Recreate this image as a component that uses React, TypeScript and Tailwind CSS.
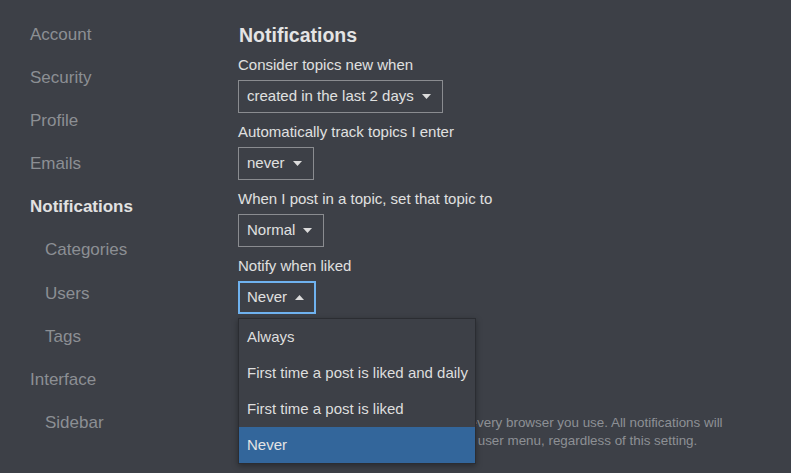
const nav = [
  { label: "Account" },
  { label: "Security" },
  { label: "Profile" },
  { label: "Emails" },
  { label: "Notifications", active: true },
  { label: "Categories", sub: true },
  { label: "Users", sub: true },
  { label: "Tags", sub: true },
  { label: "Interface" },
  { label: "Sidebar", sub: true },
];

const options = ["Always", "First time a post is liked and daily", "First time a post is liked", "Never"];

function Caret({ up }: { up?: boolean }) {
  return (
    <svg width="9" height="5" viewBox="0 0 9 5" className="ml-2 fill-[#dcdcdc]">
      {up ? <path d="M0 5 L4.5 0 L9 5 Z" /> : <path d="M0 0 L9 0 L4.5 5 Z" />}
    </svg>
  );
}

function Select({ value, open }: { value: string; open?: boolean }) {
  return (
    <div
      className={
        "inline-flex h-[33px] items-center text-[15px] text-[#e0e0e0] " +
        (open ? "border-2 border-[#6fb2ef] pl-[7px] pr-[10px]" : "border border-[#8a8c90] pl-[8px] pr-[11px]")
      }
    >
      <span>{value}</span>
      <Caret up={open} />
    </div>
  );
}

function Field({ label, value, open }: { label: string; value: string; open?: boolean }) {
  return (
    <div className="mb-[9px]">
      <div className="mb-[5px] text-[15px] leading-[20px] text-[#e0e0e0]">{label}</div>
      <Select value={value} open={open} />
    </div>
  );
}

export default function App() {
  return (
    <div
      className="flex h-[473px] w-[791px] overflow-hidden bg-[#3d4047]"
      style={{ fontFamily: '"Liberation Sans", Arial, sans-serif' }}
    >
      <nav className="w-[238px] shrink-0 pt-[13px]">
        {nav.map((n) => (
          <div
            key={n.label}
            className={
              "h-[43.1px] text-[17px] leading-[43px] " +
              (n.sub ? "pl-[45px] " : "pl-[30px] ") +
              (n.active ? "font-bold text-[#e2e2e2]" : "text-[#8c8f94]")
            }
          >
            {n.label}
          </div>
        ))}
      </nav>
      <main className="relative flex-1 pt-[23px]">
        <h1 className="mb-[8px] pl-px text-[19.5px] font-bold leading-[24px] text-[#e4e4e4]">Notifications</h1>
        <Field label="Consider topics new when" value="created in the last 2 days" />
        <Field label="Automatically track topics I enter" value="never" />
        <Field label="When I post in a topic, set that topic to" value="Normal" />
        <div className="relative">
          <div className="mb-[5px] text-[15px] leading-[20px] text-[#e0e0e0]">Notify when liked</div>
          <Select value="Never" open />
          <div className="absolute left-0 top-[62px] z-10 w-[238px] border border-[#2b2d32] bg-[#3d4047] shadow-[0_2px_6px_rgba(0,0,0,0.35)]">
            {options.map((o) => (
              <div
                key={o}
                className={
                  "h-[36px] whitespace-nowrap px-[8px] text-[15px] leading-[36px] " +
                  (o === "Never" ? "bg-[#33669b] text-[#e4e4e4]" : "text-[#dedede]")
                }
              >
                {o}
              </div>
            ))}
          </div>
        </div>
        <div className="mt-[100px] whitespace-nowrap pl-[3px] text-[13.4px] leading-[18px] text-[#8d9095]">
          <div>Note: You must change this setting on every browser you use. All notifications will</div>
          <div>be disabled if you pause notifications in user menu, regardless of this setting.</div>
        </div>
      </main>
    </div>
  );
}
